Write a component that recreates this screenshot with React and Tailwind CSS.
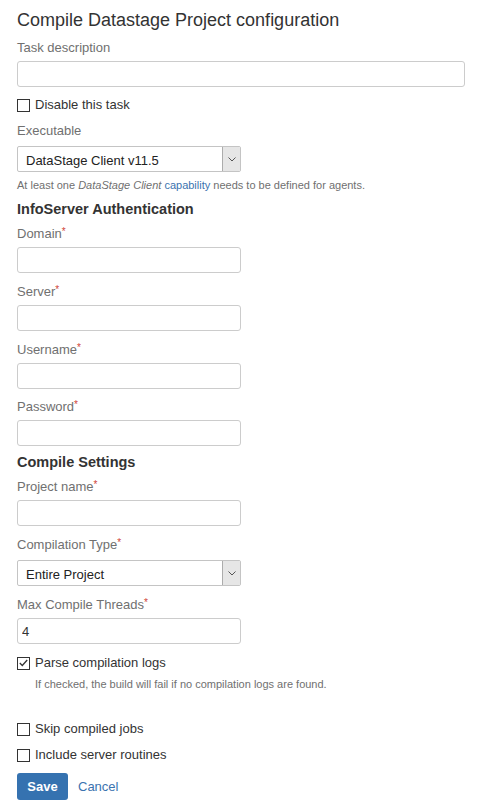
import { useState } from 'react';

// Small reusable bits for the Bamboo-style task form

function Required() {
  return <span className="relative top-[-3px] text-[10px] text-[#d04437]">*</span>;
}

function Label({ children, required }) {
  return (
    <div className="h-5 text-[13px] leading-5 text-[#707070]">
      {children}
      {required && <Required />}
    </div>
  );
}

function TextField({ label, required, value = '', wide = false, className = '' }) {
  return (
    <div className={className}>
      <Label required={required}>{label}</Label>
      <input
        type="text"
        defaultValue={value}
        className={`mt-[3px] block h-[26px] rounded-[3px] border border-[#cccccc] bg-white px-[4px] text-[13px] text-[#333] outline-none ${
          wide ? 'w-[448px]' : 'w-[224px]'
        }`}
      />
    </div>
  );
}

function SelectBox({ value }) {
  return (
    <div className="mt-[5px] flex h-[26px] w-[224px] rounded-[2px] border border-[#c4c4c4] bg-white">
      <div className="flex-1 overflow-hidden pl-[8px] text-[13px] leading-[27px] text-[#222]">{value}</div>
      <div className="flex w-[18px] items-center justify-center rounded-r-[1px] border-l border-[#acacac] bg-[#e6e6e6]">
        <svg width="8" height="5" viewBox="0 0 8 5" fill="none">
          <path d="M0.5 0.5L4 4L7.5 0.5" stroke="#555" strokeWidth="1" />
        </svg>
      </div>
    </div>
  );
}

function Checkbox({ label, checked: initial = false, className = '' }) {
  const [checked, setChecked] = useState(initial);
  return (
    <label
      className={`flex h-5 cursor-pointer items-center gap-[5px] text-[13px] text-[#333] ${className}`}
      onClick={() => setChecked(!checked)}
    >
      <span className="flex h-[13px] w-[13px] items-center justify-center border border-[#333] bg-white">
        {checked && (
          <svg width="9" height="8" viewBox="0 0 9 8" fill="none">
            <path d="M0.8 4L3.3 6.5L8.2 1" stroke="#333" strokeWidth="1.3" />
          </svg>
        )}
      </span>
      <span className="leading-5">{label}</span>
    </label>
  );
}

function Heading({ children, className = '' }) {
  return <h3 className={`h-5 text-[14.5px] font-bold leading-5 text-[#333] ${className}`}>{children}</h3>;
}

export default function App() {
  return (
    <div className="min-h-[812px] bg-white px-[17px] pt-[8px] font-['Liberation_Sans',Arial,sans-serif]">
      <h1 className="text-[18px] leading-6 text-[#333]">Compile Datastage Project configuration</h1>

      <TextField label="Task description" wide className="mt-[6px]" />
      <Checkbox label="Disable this task" className="mt-[8px]" />

      {/* Executable */}
      <div className="mt-[6px]">
        <Label>Executable</Label>
        <SelectBox value="DataStage Client v11.5" />
      </div>
      <p className="mt-[5px] text-[11px] leading-4 text-[#707070]">
        At least one <em>DataStage Client</em> <span className="text-[#3b73af]">capability</span> needs to be defined
        for agents.
      </p>

      {/* InfoServer Authentication */}
      <Heading className="mt-[6px]">InfoServer Authentication</Heading>
      <TextField label="Domain" required className="mt-[5px]" />
      <TextField label="Server" required className="mt-[9px]" />
      <TextField label="Username" required className="mt-[9px]" />
      <TextField label="Password" required className="mt-[8px]" />

      {/* Compile Settings */}
      <Heading className="mt-[6px]">Compile Settings</Heading>
      <TextField label="Project name" required className="mt-[5px]" />
      <div className="mt-[9px]">
        <Label required>Compilation Type</Label>
        <SelectBox value="Entire Project" />
      </div>
      <TextField label="Max Compile Threads" required value="4" className="mt-[9px]" />

      <Checkbox label="Parse compilation logs" checked className="mt-[9px]" />
      <p className="mt-[3px] pl-[18px] text-[11px] leading-4 text-[#707070]">
        If checked, the build will fail if no compilation logs are found.
      </p>

      <Checkbox label="Skip compiled jobs" className="mt-[27px]" />
      <Checkbox label="Include server routines" className="mt-[6px]" />

      <div className="mt-[8px] flex items-center gap-[10px]">
        <button className="h-[27px] w-[51px] rounded-[3px] bg-[#3572b0] text-[13px] font-bold text-white">Save</button>
        <span className="text-[13px] text-[#3b73af]">Cancel</span>
      </div>
    </div>
  );
}
